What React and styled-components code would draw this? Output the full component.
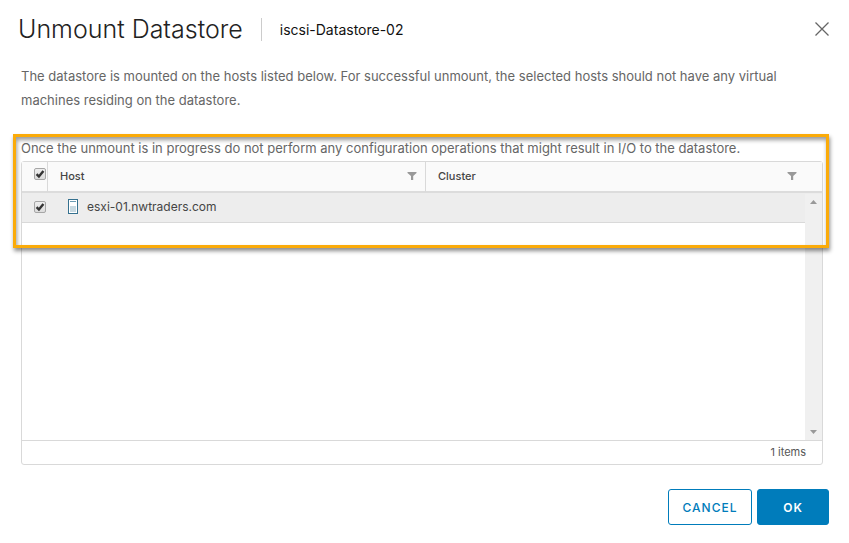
import React, { useState } from "react";
import styled, { createGlobalStyle } from "styled-components";

const GlobalStyle = createGlobalStyle`
  * { box-sizing: border-box; }
  body {
    margin: 0;
    background: #fff;
    color: #565656;
    font-family: Inter, "Open Sans", sans-serif;
  }
`;

const Dialog = styled.main`
  display: flex;
  flex-direction: column;
  min-height: 100vh;
  padding: 17px 20px 18px 18px;
`;

const Header = styled.header`
  display: flex;
  align-items: center;
  height: 24px;
`;

const Title = styled.h1`
  margin: 0;
  font-size: 25px;
  font-weight: 300;
  line-height: 24px;
  color: #222;
`;

const ObjectName = styled.span`
  margin-left: 18px;
  padding-left: 18px;
  border-left: 1px solid #ccc;
  font-size: 14px;
  line-height: 23px;
  color: #111;
`;

const CloseButton = styled.button`
  display: flex;
  margin-left: auto;
  padding: 0;
  border: 0;
  background: none;
  color: #666;
  cursor: pointer;
`;

const Message = styled.p`
  margin: 0;
  font-size: 13px;
  line-height: 24px;
  color: #666;
`;

const Content = styled.div`
  display: flex;
  flex: 1;
  flex-direction: column;
  gap: 24px;
  padding: 23px 6px 24px 3px;
`;

const HostSection = styled.section`
  position: relative;
  display: flex;
  flex: 1;
  flex-direction: column;
`;

const Highlight = styled.div`
  position: absolute;
  inset: -2px -6px auto -8px;
  height: 114px;
  border: 3px solid #fbab09;
  box-shadow: 1px 3px 4px rgba(0, 0, 0, 0.45),
    inset 1px 3px 4px rgba(0, 0, 0, 0.4);
  pointer-events: none;
`;

const Grid = styled.div`
  position: relative;
  display: flex;
  flex: 1;
  flex-direction: column;
  min-height: 160px;
  margin-top: 1px;
  border: 1px solid #d9d9d9;
  border-radius: 3px;
`;

const Table = styled.table`
  width: 100%;
  table-layout: fixed;
  border-collapse: separate;
  border-spacing: 0;
  text-align: left;
`;

const SelectColumn = styled.col`
  width: 26px;
`;

const HostColumn = styled.col`
  width: 378px;
`;

const HeadCell = styled.th`
  height: 31px;
  padding: ${(p) => (p.$select ? "0 1px 6px 12px" : "0 8px 2px 12px")};
  border-right: ${(p) => (p.$last ? "0" : "1px solid #d9d9d9")};
  border-bottom: 2px solid #dcdcdc;
  background: #fafafa;
  font-size: 11px;
  font-weight: 500;
  color: #454545;
`;

const HeadContent = styled.div`
  display: flex;
  align-items: center;
  justify-content: space-between;
  padding-right: ${(p) => (p.$last ? "17px" : "0")};
`;

const FilterButton = styled.button`
  display: flex;
  padding: 0;
  border: 0;
  background: none;
  color: #999;
  cursor: pointer;
`;

const Cell = styled.td`
  height: 30px;
  padding: ${(p) => (p.$select ? "0 1px 2px 12px" : "0 20px 2px")};
  border-bottom: 1px solid #d9d9d9;
  background: #ededed;
  font-size: 12px;
  color: #454545;
`;

const HostName = styled.div`
  display: flex;
  align-items: center;
  gap: 9px;
`;

const CheckWrap = styled.label`
  position: relative;
  display: block;
  width: 12px;
  height: 12px;
`;

const CheckInput = styled.input`
  display: block;
  width: 12px;
  height: 12px;
  margin: 0;
  appearance: none;
  border: 1px solid #a6a6a6;
  border-radius: 2px;
  background: linear-gradient(#eee, #dcdcdc);
`;

const CheckMark = styled.svg`
  position: absolute;
  inset: 0;
  display: ${(p) => (p.$on ? "block" : "none")};
  pointer-events: none;
`;

const ScrollTrack = styled.div`
  position: absolute;
  inset: 32px 0 24px auto;
  display: flex;
  flex-direction: column;
  align-items: center;
  justify-content: space-between;
  width: 17px;
  padding: 6px 0;
  background: #f0f0f0;
`;

const GridFooter = styled.footer`
  margin-top: auto;
  padding-right: 16px;
  border-top: 1px solid #d9d9d9;
  font-size: 11px;
  line-height: 23px;
  text-align: right;
  color: #565656;
`;

const Actions = styled.div`
  display: flex;
  justify-content: flex-end;
  gap: 5px;
`;

const Button = styled.button`
  min-width: ${(p) => (p.$primary ? "72px" : "84px")};
  height: 36px;
  padding: 0 12px;
  border: 1px solid #007cbb;
  border-radius: 3px;
  background: ${(p) => (p.$primary ? "#007cbb" : "#fff")};
  color: ${(p) => (p.$primary ? "#fff" : "#007cbb")};
  font-family: inherit;
  font-size: 12px;
  font-weight: ${(p) => (p.$primary ? 600 : 500)};
  letter-spacing: 1px;
  cursor: pointer;
`;

function CheckBox({ label, checked, onChange }) {
  return (
    <CheckWrap>
      <CheckInput
        type="checkbox"
        aria-label={label}
        checked={checked}
        onChange={(e) => onChange(e.target.checked)}
      />
      <CheckMark $on={checked} width="12" height="12" viewBox="0 0 12 12">
        <path d="M2.6 6.2 4.9 8.5 9.4 2.9" fill="none" stroke="#333" strokeWidth="2.4" />
      </CheckMark>
    </CheckWrap>
  );
}

function Filter({ label }) {
  return (
    <FilterButton type="button" aria-label={label}>
      <svg width="10" height="8" viewBox="0 0 10 8">
        <path d="M0.5 0H9.5V1L6.2 4V8H4V4L0.5 1Z" fill="currentColor" />
      </svg>
    </FilterButton>
  );
}

function HostIcon() {
  return (
    <svg width="10" height="15" viewBox="0 0 10 15" aria-hidden="true">
      <rect x="0.5" y="0.5" width="9" height="14" fill="#fff" stroke="#35718f" />
      <path d="M2 2.5H8" stroke="#6d9cb3" />
      <rect x="2" y="7" width="6" height="6" fill="#c8d9e1" />
    </svg>
  );
}

function Arrow({ down }) {
  return (
    <svg width="7" height="4" viewBox="0 0 7 4" aria-hidden="true">
      <path d={down ? "M0 0H7L3.5 4Z" : "M0 4H7L3.5 0Z"} fill="#999" />
    </svg>
  );
}

export default function App() {
  const [selected, setSelected] = useState(true);
  return (
    <>
      <GlobalStyle />
      <Dialog>
        <Header>
          <Title>Unmount Datastore</Title>
          <ObjectName>iscsi-Datastore-02</ObjectName>
          <CloseButton type="button" aria-label="Close">
            <svg width="14" height="14" viewBox="0 0 14 14">
              <path d="M0.5 0.5 13.5 13.5M13.5 0.5 0.5 13.5" stroke="currentColor" strokeWidth="1.3" />
            </svg>
          </CloseButton>
        </Header>
        <Content>
          <Message>
            The datastore is mounted on the hosts listed below. For successful unmount, the
            selected hosts should not have any virtual machines residing on the datastore.
          </Message>
          <HostSection>
            <Message>
              Once the unmount is in progress do not perform any configuration operations that
              might result in I/O to the datastore.
            </Message>
            <Grid>
              <Table>
                <colgroup>
                  <SelectColumn />
                  <HostColumn />
                  <col />
                </colgroup>
                <thead>
                  <tr>
                    <HeadCell $select>
                      <CheckBox label="Select all hosts" checked={selected} onChange={setSelected} />
                    </HeadCell>
                    <HeadCell>
                      <HeadContent>
                        Host
                        <Filter label="Filter hosts" />
                      </HeadContent>
                    </HeadCell>
                    <HeadCell $last>
                      <HeadContent $last>
                        Cluster
                        <Filter label="Filter clusters" />
                      </HeadContent>
                    </HeadCell>
                  </tr>
                </thead>
                <tbody>
                  <tr>
                    <Cell $select>
                      <CheckBox
                        label="Select esxi-01.nwtraders.com"
                        checked={selected}
                        onChange={setSelected}
                      />
                    </Cell>
                    <Cell>
                      <HostName>
                        <HostIcon />
                        esxi-01.nwtraders.com
                      </HostName>
                    </Cell>
                    <Cell />
                  </tr>
                </tbody>
              </Table>
              <ScrollTrack>
                <Arrow />
                <Arrow down />
              </ScrollTrack>
              <GridFooter>1 items</GridFooter>
            </Grid>
            <Highlight />
          </HostSection>
        </Content>
        <Actions>
          <Button type="button">CANCEL</Button>
          <Button type="button" $primary>
            OK
          </Button>
        </Actions>
      </Dialog>
    </>
  );
}
